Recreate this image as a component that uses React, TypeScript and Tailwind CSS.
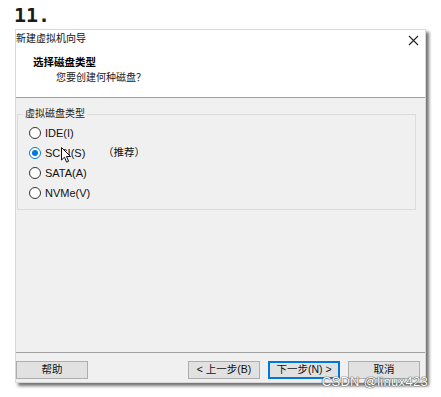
import React from 'react';

const font = 'font-["Liberation_Sans","Noto_Sans_CJK_SC",sans-serif]';

const Radio = ({ label, checked }: { label: string; checked?: boolean }) => (
  <div className="flex h-[20px] items-center gap-[4px]">
    <span
      className={`flex h-[12px] w-[12px] items-center justify-center rounded-full border bg-white ${
        checked ? 'border-[#0078d7]' : 'border-[#333333]'
      }`}
    >
      {checked && <span className="h-[6px] w-[6px] rounded-full bg-[#0078d7]" />}
    </span>
    <span className="text-[11px] text-[#111]">{label}</span>
  </div>
);

const Btn = ({ children, primary }: { children: React.ReactNode; primary?: boolean }) => (
  <button
    className={`flex h-[18px] w-[72px] items-center justify-center bg-[#e1e1e1] text-[10.5px] text-[#111] ${
      primary ? 'border-2 border-[#0078d7]' : 'border border-[#adadad]'
    }`}
  >
    {children}
  </button>
);

export default function App() {
  return (
    <div className={`h-[397px] w-[441px] bg-white ${font}`}>
      <div className='pl-[14px] pt-[3px] font-["DejaVu_Sans_Mono",monospace] text-[20px] font-bold leading-[24px] text-[#1a1a1a]'>
        11.
      </div>

      <div className="relative ml-[15px] mt-[2px] flex h-[354px] w-[411px] flex-col border border-[#d8d8d8] bg-[#f0f0f0] shadow-[3px_3px_3px_rgba(0,0,0,0.55)]">
        {/* title + header */}
        <div className="h-[68px] border-b border-[#a0a0a0] bg-white">
          <div className="flex h-[17px] items-center justify-between pr-[6px]">
            <span className="text-[10px] text-[#111]">新建虚拟机向导</span>
            <svg width="11" height="11" viewBox="0 0 11 11" className="mt-[3px]">
              <path d="M1 1 L10 10 M10 1 L1 10" stroke="#222" strokeWidth="1.1" />
            </svg>
          </div>
          <div className="pl-[17px] pt-[8px] text-[10.5px] font-bold leading-[14px] text-black">
            选择磁盘类型
          </div>
          <div className="pl-[40px] pt-[2px] text-[10px] leading-[14px] text-[#222]">
            您要创建何种磁盘？
          </div>
        </div>

        {/* body */}
        <div className="flex-1 px-[1px] pt-[16px]">
          <div className="relative mr-[8px] h-[96px] border border-[#dcdcdc] pl-[11px] pt-[8px]">
            <span className="absolute left-[5px] top-[-8px] bg-[#f0f0f0] px-[2px] text-[10px] leading-[14px] text-[#222]">
              虚拟磁盘类型
            </span>
            <Radio label="IDE(I)" />
            <div className="flex items-center">
              <div className="w-[74px]">
                <Radio label="SCSI(S)" checked />
              </div>
              <span className="text-[10.5px] text-[#111]">（推荐）</span>
            </div>
            <Radio label="SATA(A)" />
            <Radio label="NVMe(V)" />

            {/* mouse cursor */}
            <svg
              width="11"
              height="17"
              viewBox="0 0 11 17"
              className="absolute left-[43px] top-[32px]"
            >
              <path
                d="M0.5 0.5 L0.5 13 L3.5 10.2 L5.6 15.2 L7.6 14.3 L5.5 9.5 L9.5 9.5 Z"
                fill="white"
                stroke="#111"
                strokeWidth="1"
              />
            </svg>
          </div>
        </div>

        {/* footer */}
        <div className="h-[30px] border-t border-[#a0a0a0]">
          <div className="flex items-center pt-[8px]">
            <div className="w-[172px]">
              <Btn>帮助</Btn>
            </div>
            <div className="flex gap-[8px]">
              <Btn>&lt; 上一步(B)</Btn>
              <Btn primary>下一步(N) &gt;</Btn>
              <Btn>取消</Btn>
            </div>
          </div>
        </div>

        <span className="absolute bottom-[-9px] right-[-3px] text-[13px] tracking-[0.3px] text-white [text-shadow:0_0_1px_#555,0_0_1px_#555,0_0_1px_#555]">
          CSDN @linux423
        </span>
      </div>
    </div>
  );
}
